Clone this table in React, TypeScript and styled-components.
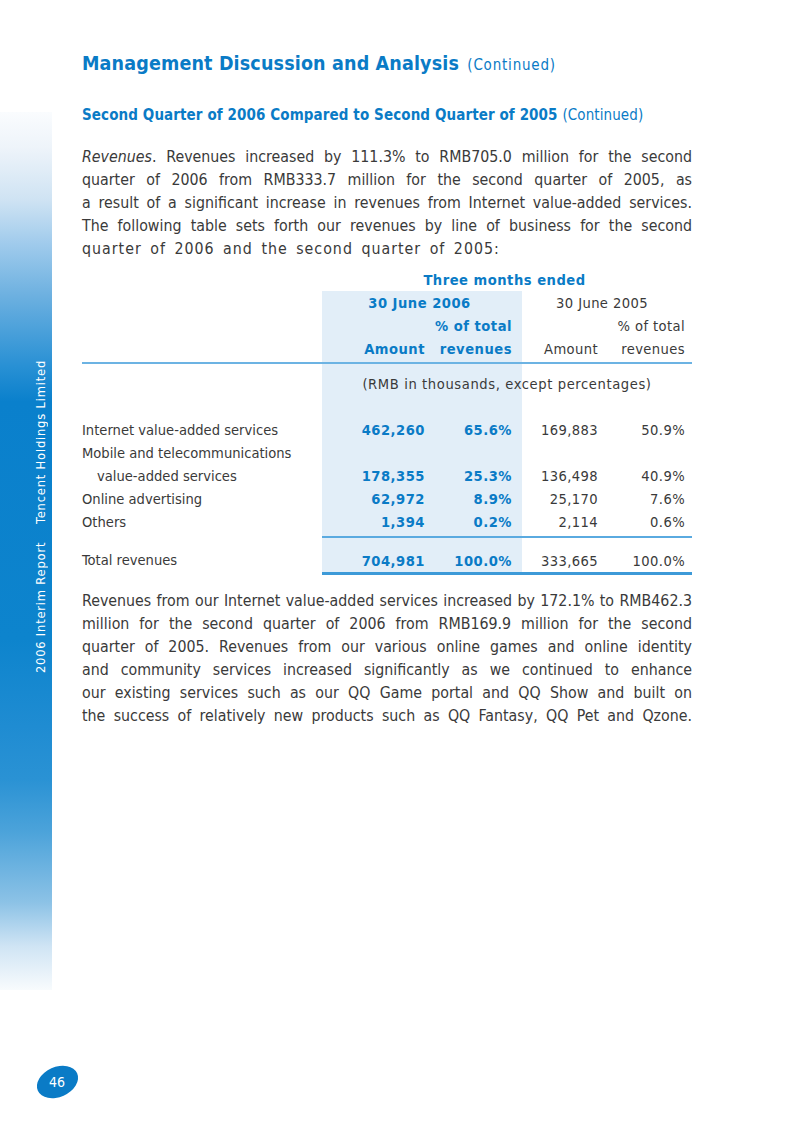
import styled, { createGlobalStyle } from 'styled-components';

const GlobalStyle = createGlobalStyle`
	html, body {
		margin: 0;
		padding: 0;
		background: #fff;
	}
	body {
		font-family: "Liberation Sans Narrow", "DejaVu Sans Condensed", Roboto, sans-serif;
		color: #3a3a3a;
	}
`;

type LineProps = {
	last?: boolean;
	spread?: boolean;
};

type CellProps = {
	align?: 'left' | 'right' | 'center';
	shade?: boolean;
	blue?: boolean;
	bold?: boolean;
	indent?: boolean;
};

const para1 = [
	'Revenues. Revenues increased by 111.3% to RMB705.0 million for the second',
	'quarter of 2006 from RMB333.7 million for the second quarter of 2005, as',
	'a result of a significant increase in revenues from Internet value-added services.',
	'The following table sets forth our revenues by line of business for the second',
	'quarter of 2006 and the second quarter of 2005:',
];

const para2 = [
	'Revenues from our Internet value-added services increased by 172.1% to RMB462.3',
	'million for the second quarter of 2006 from RMB169.9 million for the second',
	'quarter of 2005. Revenues from our various online games and online identity',
	'and community services increased significantly as we continued to enhance',
	'our existing services such as our QQ Game portal and QQ Show and built on',
	'the success of relatively new products such as QQ Fantasy, QQ Pet and Qzone.',
];

const rows = [
	{ label: 'Internet value-added services', a: '462,260', p: '65.6%', b: '169,883', q: '50.9%' },
	{ label: 'Mobile and telecommunications', a: '', p: '', b: '', q: '' },
	{ label: 'value-added services', a: '178,355', p: '25.3%', b: '136,498', q: '40.9%', indent: true },
	{ label: 'Online advertising', a: '62,972', p: '8.9%', b: '25,170', q: '7.6%' },
	{ label: 'Others', a: '1,394', p: '0.2%', b: '2,114', q: '0.6%' },
];

export default function App() {
	return (
		<Page>
			<GlobalStyle />
			<Side>
				<Band>
					<SideText>2006 Interim Report&nbsp;&nbsp;&nbsp;&nbsp;Tencent Holdings Limited</SideText>
				</Band>
				<PageNo>
					<span>46</span>
				</PageNo>
			</Side>
			<Main>
				<Title>
					Management Discussion and Analysis <small>(Continued)</small>
				</Title>
				<SubTitle>
					Second Quarter of 2006 Compared to Second Quarter of 2005 <span>(Continued)</span>
				</SubTitle>
				<Para>
					{para1.map((line, i) => (
						<Line key={i} last={i === para1.length - 1} spread={i === para1.length - 1}>
							{i === 0 ? (
								<>
									<em>Revenues</em>
									{line.slice(8)}
								</>
							) : line}
						</Line>
					))}
				</Para>

				<Table>
					<colgroup>
						<col style={{ width: 240 }} />
						<col style={{ width: 108 }} />
						<col style={{ width: 92 }} />
						<col style={{ width: 83 }} />
						<col style={{ width: 87 }} />
					</colgroup>
					<tbody>
						<TopRow>
							<Td />
							<Td colSpan={4} align="center" blue bold>Three months ended</Td>
						</TopRow>
						<HeadRow>
							<Td />
							<Td colSpan={2} align="center" shade blue bold>30 June 2006</Td>
							<Td colSpan={2} align="center">30 June 2005</Td>
						</HeadRow>
						<HeadRow>
							<Td />
							<Td shade />
							<Td align="right" shade blue bold>% of total</Td>
							<Td />
							<Td align="right">% of total</Td>
						</HeadRow>
						<RuleRow>
							<Td />
							<Td align="right" shade blue bold>Amount</Td>
							<Td align="right" shade blue bold>revenues</Td>
							<Td align="right">Amount</Td>
							<Td align="right">revenues</Td>
						</RuleRow>
						<NoteRow>
							<Td />
							<NoteTd colSpan={4}>
								<NoteShade />
								<NoteText>(RMB in thousands, except percentages)</NoteText>
							</NoteTd>
						</NoteRow>
						<SpacerRow>
							<Td />
							<Td shade />
							<Td shade />
							<Td />
							<Td />
						</SpacerRow>
						{rows.map((r, i) => (
							<BodyRow key={i}>
								<Td indent={r.indent}>{r.label}</Td>
								<Td align="right" shade blue bold>{r.a}</Td>
								<Td align="right" shade blue bold>{r.p}</Td>
								<Td align="right">{r.b}</Td>
								<Td align="right">{r.q}</Td>
							</BodyRow>
						))}
						<GapRow>
							<Td />
							<Td shade />
							<Td shade />
							<Td />
							<Td />
						</GapRow>
						<TotalRow>
							<Td>Total revenues</Td>
							<Td align="right" shade blue bold>704,981</Td>
							<Td align="right" shade blue bold>100.0%</Td>
							<Td align="right">333,665</Td>
							<Td align="right">100.0%</Td>
						</TotalRow>
					</tbody>
				</Table>

				<Para>
					{para2.map((line, i) => (
						<Line key={i}>{line}</Line>
					))}
				</Para>
			</Main>
		</Page>
	);
}

const BLUE = '#0a7bc6';

const Page = styled.div`
	display: grid;
	grid-template-columns: 52px 610px;
	column-gap: 30px;
	width: 800px;
	height: 1136px;
	overflow: hidden;
`;

const Side = styled.div`
	display: flex;
	flex-direction: column;
	padding-top: 112px;
`;

const Band = styled.div`
	height: 878px;
	display: flex;
	justify-content: flex-end;
	padding: 248px 4px 0 0;
	box-sizing: border-box;
	background: linear-gradient(
		to bottom,
		#fafcfe 0%,
		#eef4fa 4%,
		#cfe3f3 10%,
		#a0cbec 15%,
		#6cb0e0 21%,
		#2890d4 29%,
		#0a80cc 33%,
		#0d84cd 60%,
		#1f8cd2 70%,
		#2a92d4 76%,
		#4ca3da 82%,
		#8cc2e6 90%,
		#cfe4f4 95%,
		#f8fbfd 100%
	);
`;

const SideText = styled.div`
	writing-mode: vertical-rl;
	transform: rotate(180deg);
	color: #fff;
	font-family: "Liberation Sans Narrow", "DejaVu Sans Condensed", Roboto, sans-serif;
	font-size: 12.8px;
	letter-spacing: 0.8px;
	white-space: nowrap;
	height: fit-content;
`;

const PageNo = styled.div`
	margin: 77px 0 0 36px;
	width: 43px;
	height: 30px;
	border-radius: 50%;
	background: ${BLUE};
	transform: rotate(-24deg);
	display: flex;
	align-items: center;
	justify-content: center;

	span {
		transform: rotate(24deg);
		color: #fff;
		font-size: 14px;
		font-family: "DejaVu Sans Condensed", sans-serif;
		font-weight: 300;
	}
`;

const Main = styled.div`
	padding-top: 50px;
`;

const Title = styled.h1`
	margin: 0;
	color: ${BLUE};
	font-size: 19.5px;
	font-weight: bold;
	letter-spacing: 0.15px;
	line-height: 28px;

	small {
		font-size: 15px;
		font-weight: normal;
		letter-spacing: 0.8px;
		margin-left: 2px;
	}
`;

const SubTitle = styled.h2`
	margin: 25px 0 0;
	color: ${BLUE};
	font-size: 15px;
	font-weight: bold;
	line-height: 22px;
	letter-spacing: 0.1px;

	span {
		font-weight: normal;
	}
`;

const Para = styled.div`
	margin-top: 19px;
	font-size: 15.8px;
	line-height: 23px;
	color: #3a3a3a;

	& + table + & {
		margin-top: 3px;
	}
`;

const Line = styled.div<LineProps>`
	text-align: justify;
	text-align-last: ${p => (p.last ? 'left' : 'justify')};
	white-space: nowrap;
	letter-spacing: ${p => (p.spread ? '1px' : '0')};
	word-spacing: ${p => (p.spread ? '3px' : '0')};
`;

const Table = styled.table`
	width: 610px;
	margin: 7px 0 14px;
	border-collapse: collapse;
	table-layout: fixed;
	font-size: 14.6px;
`;

const Td = styled.td<CellProps>`
	padding: 0 7px 0 0;
	height: 23px;
	line-height: 23px;
	white-space: nowrap;
	text-align: ${p => p.align || 'left'};
	background: ${p => (p.shade ? '#e2eef8' : 'transparent')};
	color: ${p => (p.blue ? BLUE : '#3a3a3a')};
	font-weight: ${p => (p.bold ? 'bold' : 'normal')};
	letter-spacing: ${p => (p.bold ? '0.5px' : '0.4px')};

	&:first-child {
		padding-left: ${p => (p.indent ? '15px' : '0')};
		letter-spacing: 0;
	}
	&:nth-child(2) {
		padding-right: 5px;
	}
	&:nth-child(3) {
		padding-right: 10px;
	}
`;

const TopRow = styled.tr`
	td {
		height: 24px;
	}
`;

const HeadRow = styled.tr``;

const RuleRow = styled.tr`
	td {
		border-bottom: 2px solid #6cb3e3;
		padding-bottom: 2px;
	}
`;

const NoteRow = styled.tr`
	td {
		height: 31px;
		vertical-align: top;
	}
`;

const NoteTd = styled.td`
	position: relative;
	padding: 0;
	text-align: center;
	height: 31px;
`;

const NoteShade = styled.div`
	position: absolute;
	left: 0;
	top: 0;
	bottom: 0;
	width: 200px;
	background: #e2eef8;
`;

const NoteText = styled.span`
	position: relative;
	display: block;
	padding-top: 8px;
	line-height: 23px;
	color: #3a3a3a;
	letter-spacing: 0.6px;
`;

const SpacerRow = styled.tr`
	td {
		height: 23px;
	}
`;

const BodyRow = styled.tr``;

const GapRow = styled.tr`
	td {
		height: 3px;
		line-height: 3px;
	}
	td:not(:first-child) {
		border-bottom: 2px solid #5aaae0;
	}
`;

const TotalRow = styled.tr`
	td {
		height: 23px;
		padding-top: 11px;
		padding-bottom: 0;
		line-height: 23px;
		vertical-align: top;
	}
	td:not(:first-child) {
		border-bottom: 3px solid #3d9ad8;
	}
`;
